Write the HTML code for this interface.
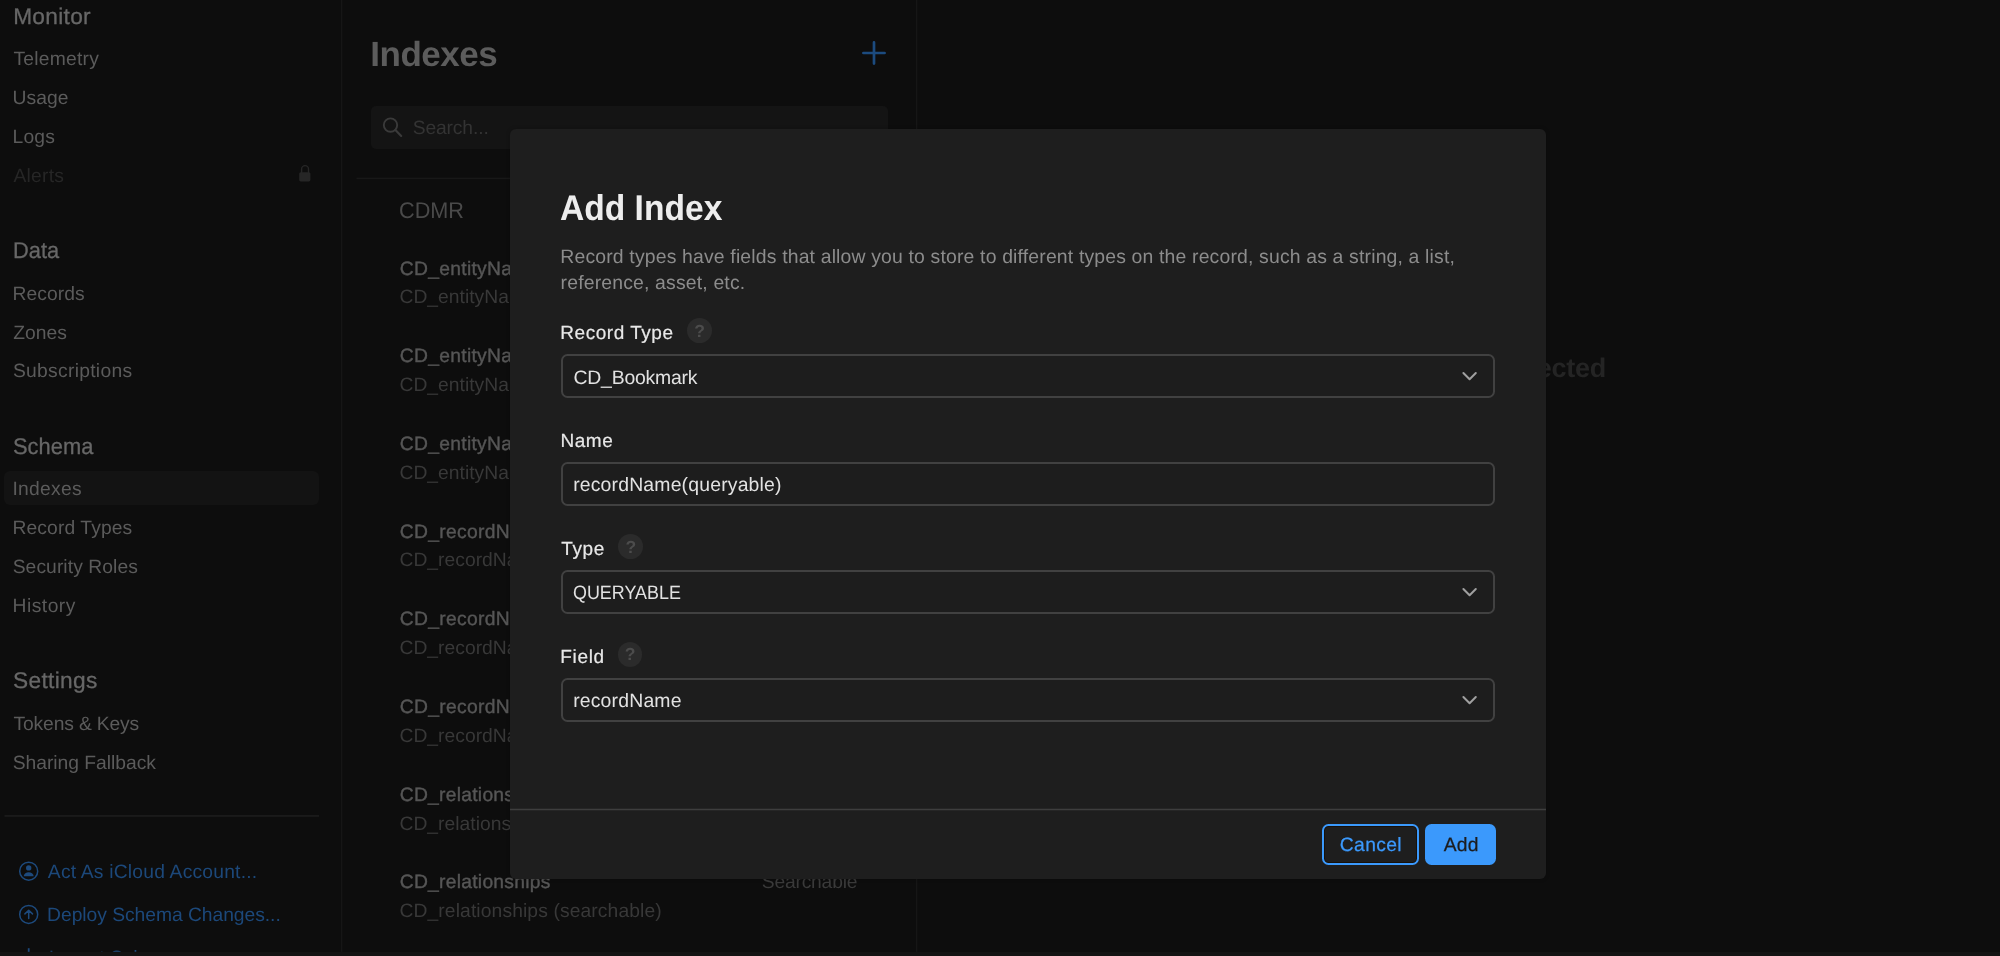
<!DOCTYPE html>
<html><head><meta charset="utf-8"><title>CloudKit Console</title>
<style>
html,body{margin:0;padding:0;}
body{width:2000px;height:956px;overflow:hidden;background:#0d0d0d;position:relative;font-family:"Liberation Sans",sans-serif;text-rendering:geometricPrecision;}
.t{position:absolute;white-space:pre;display:block;}
.abs{position:absolute;}
.layer{position:absolute;left:0;top:0;width:2000px;height:956px;will-change:transform;}
.inp{position:absolute;left:560.9px;width:930.6px;height:40px;border:2px solid #414141;border-radius:6.5px;background:#1d1d1d;}
.help{position:absolute;width:24.6px;height:24.6px;border-radius:50%;background:#2b2b2b;}
svg{position:absolute;overflow:visible;}
#modalclip{position:absolute;left:0;top:0;width:2000px;height:956px;}
</style></head>
<body>
<!-- column borders -->
<!-- sidebar selection -->
<div class="abs" style="left:4.2px;top:471.2px;width:314.8px;height:34.3px;border-radius:6px;background:#131313"></div>
<!-- sidebar divider -->
<!-- search box -->
<div class="abs" style="left:371px;top:105.7px;width:516.5px;height:43.1px;border-radius:5px;background:#141414"></div>
<!-- list divider -->

<svg width="2000" height="956" viewBox="0 0 2000 956" style="left:0;top:0">
  <rect x="340.9" y="0" width="1.4" height="956" fill="#161616"/>
  <rect x="916" y="0" width="1.3" height="956" fill="#161616"/>
  <rect x="4.5" y="815.1" width="314.5" height="1.7" fill="#1c1c1c"/>
  <rect x="356.5" y="177.6" width="545" height="1.6" fill="#181818"/>
  <!-- lock -->
  <rect x="299.2" y="172.2" width="11.2" height="9.2" rx="1.6" fill="#262626"/>
  <path d="M301.6 173 v-3.9 a3.45 3.45 0 0 1 6.9 0 v3.9" fill="none" stroke="#262626" stroke-width="1.4"/>
  <!-- plus -->
  <path d="M863.4 53 h21.2 M874 42.4 v21.2" stroke="#1c4b7f" stroke-width="2.7" stroke-linecap="round" fill="none"/>
  <!-- search icon -->
  <circle cx="390.5" cy="125.1" r="6.7" fill="none" stroke="#3a3a3a" stroke-width="1.9"/>
  <path d="M395.4 130 l5.8 5.9" stroke="#3a3a3a" stroke-width="2.2" stroke-linecap="round"/>
  <!-- person icon -->
  <g stroke="#1d4a7d" fill="none" stroke-width="1.5">
    <circle cx="28.7" cy="871.2" r="9"/>
    <circle cx="28.7" cy="914.4" r="9"/>
    <path d="M28.7 918.6 v-8 M24.9 913.9 l3.8 -3.7 l3.8 3.7" stroke-linecap="round" stroke-linejoin="round"/>
    <path d="M28.7 948.2 v10" stroke-width="1.8"/>
  </g>
  <circle cx="28.7" cy="867.9" r="2.7" fill="#1d4a7d"/>
  <path d="M23.7 876.2 c0.4 -5.4 9.6 -5.4 10 0 z" fill="#1d4a7d"/>
</svg>

<div class="layer"><span class="t" style="left:13.18px;top:3px;font-size:22.7px;line-height:27px;letter-spacing:0.302px;color:#676767;-webkit-text-stroke:0.3px #676767;">Monitor</span>
<span class="t" style="left:13.51px;top:48px;font-size:19.3px;line-height:23px;letter-spacing:0.227px;color:#5b5b5b;">Telemetry</span>
<span class="t" style="left:12.49px;top:87px;font-size:19.3px;line-height:23px;letter-spacing:0.057px;color:#5b5b5b;">Usage</span>
<span class="t" style="left:12.59px;top:126px;font-size:19.3px;line-height:23px;letter-spacing:0.127px;color:#5b5b5b;">Logs</span>
<span class="t" style="left:13.51px;top:165px;font-size:19.3px;line-height:23px;letter-spacing:0.236px;color:#262626;">Alerts</span>
<span class="t" style="left:13.43px;top:237px;font-size:22.7px;line-height:27px;letter-spacing:0.000px;color:#676767;-webkit-text-stroke:0.3px #676767;transform:scaleX(0.9619);transform-origin:0 0;">Data</span>
<span class="t" style="left:12.53px;top:283px;font-size:19.3px;line-height:23px;letter-spacing:0.053px;color:#5b5b5b;">Records</span>
<span class="t" style="left:13.33px;top:322px;font-size:19.3px;line-height:23px;letter-spacing:-0.025px;color:#5b5b5b;">Zones</span>
<span class="t" style="left:12.94px;top:360px;font-size:19.3px;line-height:23px;letter-spacing:0.283px;color:#5b5b5b;">Subscriptions</span>
<span class="t" style="left:13.15px;top:433px;font-size:22.7px;line-height:27px;letter-spacing:0.000px;color:#676767;-webkit-text-stroke:0.3px #676767;transform:scaleX(0.9649);transform-origin:0 0;">Schema</span>
<span class="t" style="left:12.45px;top:478px;font-size:19.3px;line-height:23px;letter-spacing:0.278px;color:#5b5b5b;">Indexes</span>
<span class="t" style="left:12.53px;top:517px;font-size:19.3px;line-height:23px;letter-spacing:0.097px;color:#5b5b5b;">Record Types</span>
<span class="t" style="left:12.69px;top:556px;font-size:19.3px;line-height:23px;letter-spacing:0.063px;color:#5b5b5b;">Security Roles</span>
<span class="t" style="left:12.59px;top:595px;font-size:19.3px;line-height:23px;letter-spacing:0.470px;color:#5b5b5b;">History</span>
<span class="t" style="left:13.08px;top:667px;font-size:22.7px;line-height:27px;letter-spacing:0.311px;color:#676767;-webkit-text-stroke:0.3px #676767;">Settings</span>
<span class="t" style="left:13.51px;top:713px;font-size:19.3px;line-height:23px;letter-spacing:-0.148px;color:#5b5b5b;">Tokens &amp; Keys</span>
<span class="t" style="left:12.69px;top:752px;font-size:19.3px;line-height:23px;letter-spacing:-0.026px;color:#5b5b5b;">Sharing Fallback</span>
<span class="t" style="left:47.87px;top:861px;font-size:19.3px;line-height:23px;letter-spacing:0.198px;color:#1c487a;">Act As iCloud Account...</span>
<span class="t" style="left:47.09px;top:904px;font-size:19.3px;line-height:23px;letter-spacing:-0.045px;color:#1c487a;">Deploy Schema Changes...</span>
<span class="t" style="left:48.80px;top:947px;font-size:19.3px;line-height:23px;letter-spacing:0.213px;color:#1c487a;">Import Schema...</span>
<span class="t" style="left:370.37px;top:34px;font-size:35px;line-height:42px;letter-spacing:-0.500px;color:#5c5c5c;font-weight:700;">Indexes</span>
<span class="t" style="left:412.70px;top:117px;font-size:19.3px;line-height:23px;letter-spacing:-0.139px;color:#333333;">Search...</span>
<span class="t" style="left:399.08px;top:197px;font-size:22.7px;line-height:27px;letter-spacing:0.000px;color:#4a4a4a;transform:scaleX(0.9551);transform-origin:0 0;">CDMR</span>
<span class="t" style="left:399.76px;top:258px;font-size:19.3px;line-height:23px;letter-spacing:0.293px;color:#565656;-webkit-text-stroke:0.4px #565656;">CD_entityName</span>
<span class="t" style="left:399.44px;top:286px;font-size:19.3px;line-height:23px;letter-spacing:0.015px;color:#383838;">CD_entityName (queryable)</span>
<span class="t" style="left:770.23px;top:258px;font-size:19.3px;line-height:23px;letter-spacing:-0.217px;color:#3a3a3a;">Queryable</span>
<span class="t" style="left:399.76px;top:345px;font-size:19.3px;line-height:23px;letter-spacing:0.293px;color:#565656;-webkit-text-stroke:0.4px #565656;">CD_entityName</span>
<span class="t" style="left:399.44px;top:374px;font-size:19.3px;line-height:23px;letter-spacing:0.015px;color:#383838;">CD_entityName (searchable)</span>
<span class="t" style="left:761.80px;top:345px;font-size:19.3px;line-height:23px;letter-spacing:-0.211px;color:#3a3a3a;">Searchable</span>
<span class="t" style="left:399.76px;top:433px;font-size:19.3px;line-height:23px;letter-spacing:0.293px;color:#565656;-webkit-text-stroke:0.4px #565656;">CD_entityName</span>
<span class="t" style="left:399.44px;top:462px;font-size:19.3px;line-height:23px;letter-spacing:0.015px;color:#383838;">CD_entityName (sortable)</span>
<span class="t" style="left:787.00px;top:433px;font-size:19.3px;line-height:23px;letter-spacing:-0.200px;color:#3a3a3a;">Sortable</span>
<span class="t" style="left:399.76px;top:521px;font-size:19.3px;line-height:23px;letter-spacing:0.312px;color:#565656;-webkit-text-stroke:0.4px #565656;">CD_recordName</span>
<span class="t" style="left:399.44px;top:549px;font-size:19.3px;line-height:23px;letter-spacing:0.016px;color:#383838;">CD_recordName (queryable)</span>
<span class="t" style="left:770.23px;top:521px;font-size:19.3px;line-height:23px;letter-spacing:-0.217px;color:#3a3a3a;">Queryable</span>
<span class="t" style="left:399.76px;top:608px;font-size:19.3px;line-height:23px;letter-spacing:0.312px;color:#565656;-webkit-text-stroke:0.4px #565656;">CD_recordName</span>
<span class="t" style="left:399.44px;top:637px;font-size:19.3px;line-height:23px;letter-spacing:0.016px;color:#383838;">CD_recordName (searchable)</span>
<span class="t" style="left:761.80px;top:608px;font-size:19.3px;line-height:23px;letter-spacing:-0.211px;color:#3a3a3a;">Searchable</span>
<span class="t" style="left:399.76px;top:696px;font-size:19.3px;line-height:23px;letter-spacing:0.312px;color:#565656;-webkit-text-stroke:0.4px #565656;">CD_recordName</span>
<span class="t" style="left:399.44px;top:725px;font-size:19.3px;line-height:23px;letter-spacing:0.016px;color:#383838;">CD_recordName (sortable)</span>
<span class="t" style="left:787.00px;top:696px;font-size:19.3px;line-height:23px;letter-spacing:-0.200px;color:#3a3a3a;">Sortable</span>
<span class="t" style="left:399.76px;top:784px;font-size:19.3px;line-height:23px;letter-spacing:0.253px;color:#565656;-webkit-text-stroke:0.4px #565656;">CD_relationships</span>
<span class="t" style="left:399.44px;top:813px;font-size:19.3px;line-height:23px;letter-spacing:0.014px;color:#383838;">CD_relationships (queryable)</span>
<span class="t" style="left:770.23px;top:784px;font-size:19.3px;line-height:23px;letter-spacing:-0.217px;color:#3a3a3a;">Queryable</span>
<span class="t" style="left:399.76px;top:871px;font-size:19.3px;line-height:23px;letter-spacing:0.253px;color:#565656;-webkit-text-stroke:0.4px #565656;">CD_relationships</span>
<span class="t" style="left:399.44px;top:900px;font-size:19.3px;line-height:23px;letter-spacing:0.104px;color:#383838;">CD_relationships (searchable)</span>
<span class="t" style="left:761.80px;top:871px;font-size:19.3px;line-height:23px;letter-spacing:-0.211px;color:#3a3a3a;">Searchable</span>
<span class="t" style="left:1378.41px;top:352px;font-size:27px;line-height:32px;letter-spacing:-0.300px;color:#242424;font-weight:700;">No Index Selected</span></div>

<!-- bottom bar -->
<svg width="2000" height="956" viewBox="0 0 2000 956" style="left:0;top:0"><rect x="0" y="951.8" width="2000" height="4.2" fill="#131313"/></svg>

<!-- modal -->
<div class="abs" style="left:510px;top:128.5px;width:1036px;height:750.4px;border-radius:6px;background:#1e1e1e;box-shadow:0 0 4px rgba(0,0,0,0.22)"></div>
<div class="inp" style="top:354px"></div>
<div class="inp" style="top:462px"></div>
<div class="inp" style="top:570px"></div>
<div class="inp" style="top:678px"></div>
<div class="help" style="left:687.2px;top:318.3px"></div>
<div class="help" style="left:618.4px;top:534.2px"></div>
<div class="help" style="left:617.7px;top:642px"></div>
<svg width="2000" height="956" viewBox="0 0 2000 956" style="left:0;top:0">
  <g stroke="#a0a0a0" stroke-width="2" fill="none" stroke-linecap="round" stroke-linejoin="round">
    <path d="M1463.4 373 l6.2 6.2 l6.2 -6.2"/>
    <path d="M1463.4 589 l6.2 6.2 l6.2 -6.2"/>
    <path d="M1463.4 697 l6.2 6.2 l6.2 -6.2"/>
  </g>
</svg>
<!-- modal footer -->
<svg width="2000" height="956" viewBox="0 0 2000 956" style="left:0;top:0"><rect x="510" y="808.7" width="1036" height="1.6" fill="#3e3e3e"/></svg>
<div class="abs" style="left:1321.8px;top:824.3px;width:92.8px;height:36.8px;border:2px solid #3b99fc;border-radius:6.5px;background:#1e1e1e;box-shadow:inset 0 0 0 1px #17110b"></div>
<div class="abs" style="left:1425.3px;top:824.3px;width:70.3px;height:40.8px;border-radius:6.5px;background:#3b99fc"></div>
<div class="layer"><span class="t" style="left:559.93px;top:187px;font-size:35.8px;line-height:43px;letter-spacing:0.000px;color:#ededed;font-weight:700;transform:scaleX(0.9382);transform-origin:0 0;">Add Index</span>
<span class="t" style="left:560.34px;top:246px;font-size:19.4px;line-height:23px;letter-spacing:0.164px;color:#8c8c8c;">Record types have fields that allow you to store to different types on the record, such as a string, a list,</span>
<span class="t" style="left:560.57px;top:272px;font-size:19.4px;line-height:23px;letter-spacing:0.168px;color:#8c8c8c;">reference, asset, etc.</span>
<span class="t" style="left:560.30px;top:322px;font-size:19px;line-height:23px;letter-spacing:0.533px;color:#e8e8e8;-webkit-text-stroke:0.2px #e8e8e8;">Record Type</span>
<span class="t" style="left:560.40px;top:430px;font-size:19px;line-height:23px;letter-spacing:0.577px;color:#e8e8e8;-webkit-text-stroke:0.2px #e8e8e8;">Name</span>
<span class="t" style="left:561.32px;top:538px;font-size:19px;line-height:23px;letter-spacing:0.580px;color:#e8e8e8;-webkit-text-stroke:0.2px #e8e8e8;">Type</span>
<span class="t" style="left:560.34px;top:646px;font-size:19px;line-height:23px;letter-spacing:0.668px;color:#e8e8e8;-webkit-text-stroke:0.2px #e8e8e8;">Field</span>
<span class="t" style="left:573.57px;top:367px;font-size:19.4px;line-height:23px;letter-spacing:-0.223px;color:#e2e2e2;">CD_Bookmark</span>
<span class="t" style="left:573.14px;top:474px;font-size:19.4px;line-height:23px;letter-spacing:0.180px;color:#e2e2e2;">recordName(queryable)</span>
<span class="t" style="left:573.30px;top:582px;font-size:19.4px;line-height:23px;letter-spacing:0.000px;color:#e2e2e2;transform:scaleX(0.9237);transform-origin:0 0;">QUERYABLE</span>
<span class="t" style="left:573.14px;top:690px;font-size:19.4px;line-height:23px;letter-spacing:0.187px;color:#e2e2e2;">recordName</span>
<span class="t" style="left:1339.86px;top:834px;font-size:19.3px;line-height:23px;letter-spacing:0.322px;color:#3b99fc;-webkit-text-stroke:0.25px #3b99fc;">Cancel</span>
<span class="t" style="left:1443.65px;top:834px;font-size:19.3px;line-height:23px;letter-spacing:0.210px;color:#1c1c1e;-webkit-text-stroke:0.25px #1c1c1e;">Add</span>
<span class="t" style="left:694.2px;top:320.6px;font-size:17.5px;line-height:20px;color:#4c4c4c;font-weight:700">?</span>
<span class="t" style="left:625.4px;top:536.5px;font-size:17.5px;line-height:20px;color:#4c4c4c;font-weight:700">?</span>
<span class="t" style="left:624.7px;top:644.3px;font-size:17.5px;line-height:20px;color:#4c4c4c;font-weight:700">?</span>
</div>
</body></html>
